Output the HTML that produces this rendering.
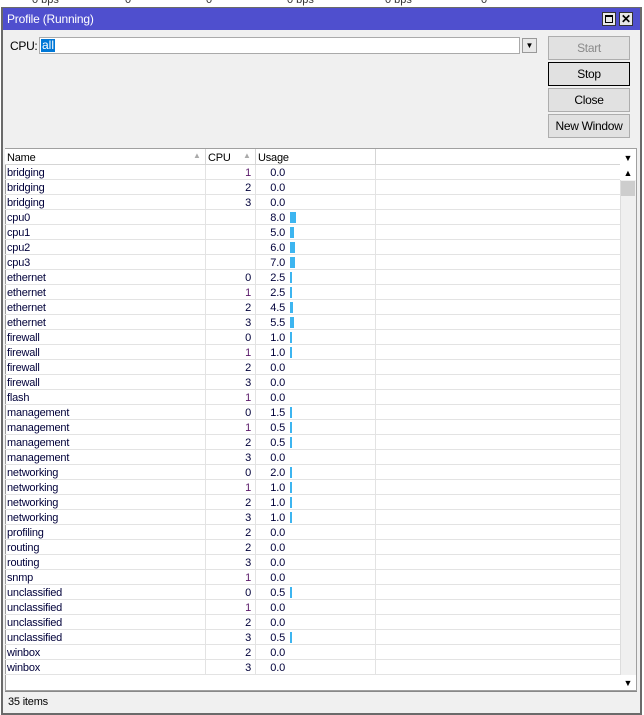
<!DOCTYPE html><html><head><style>
*{margin:0;padding:0;box-sizing:border-box}
body{width:644px;height:715px;background:#fff;position:relative;overflow:hidden;font-family:"Liberation Sans",sans-serif;font-size:11px;color:#000}
.a{position:absolute}
.btn{position:absolute;left:548px;width:82px;height:24px;border:1px solid #adadad;background:#e1e1e1;text-align:center;line-height:23px;font-size:12px;letter-spacing:-0.3px}
.row{position:absolute;left:5px;width:615px;height:15px;border-bottom:1px solid #e3e3e3;line-height:16px;font-size:11px;color:#00003a;letter-spacing:-0.2px}
.row span{position:absolute;top:0}
.n{left:2px}.c{left:200px;width:50px;text-align:right;padding-right:4px}.u{left:250px;width:30px;text-align:right}
.bar{position:absolute;top:2px;left:285px;height:11px;background:#3db5f0}
.vl{position:absolute;top:0;height:15px;width:1px;background:#e3e3e3}
</style></head><body>
<div class="a" style="left:0;top:0;width:644px;height:8px;background:#fff;font-size:11px;color:#333"><span class="a" style="left:32px;top:-6px">0 bps</span><span class="a" style="left:125px;top:-6px">0</span><span class="a" style="left:206px;top:-6px">0</span><span class="a" style="left:287px;top:-6px">0 bps</span><span class="a" style="left:385px;top:-6px">0 bps</span><span class="a" style="left:481px;top:-6px">0</span></div>
<div class="a" style="left:1px;top:7px;width:641px;height:708px;background:#f0f0f0;border:2px solid #6a6a6a;border-top:1px solid #6a6a6a"></div>
<div class="a" style="left:3px;top:8px;width:637px;height:22px;background:#4f4fce;color:#fff;font-size:12px;line-height:23px;padding-left:4px;letter-spacing:-0.2px">Profile (Running)</div>
<div class="a" style="left:602px;top:12px;width:14px;height:14px;background:#e8e8e8;border:1px solid #333"><div class="a" style="left:2px;top:2px;width:8px;height:8px;border:1px solid #000;border-top:2px solid #000"></div></div>
<div class="a" style="left:619px;top:12px;width:14px;height:14px;background:#e8e8e8;border:1px solid #333;font-size:12px;line-height:12px;text-align:center;font-weight:bold">✕</div>
<div class="a" style="left:10px;top:39px;font-size:12px;letter-spacing:-0.3px">CPU:</div>
<div class="a" style="left:39px;top:37px;width:481px;height:17px;background:#fff;border:1px solid #aaa"><span style="background:#0078d7;color:#fff;font-size:12px;line-height:13px;position:absolute;left:1px;top:1px;padding:0 1px">all</span></div>
<div class="a" style="left:522px;top:38px;width:15px;height:15px;border:1px solid #999;background:#e8e8e8;font-size:8px;text-align:center;line-height:13px">▼</div>
<div class="btn" style="top:36px;color:#8a8a8a">Start</div>
<div class="btn" style="top:62px;border:1px solid #000">Stop</div>
<div class="btn" style="top:88px">Close</div>
<div class="btn" style="top:114px">New Window</div>
<div class="a" style="left:5px;top:148px;width:632px;height:543px;background:#fff;border:1px solid #a0a0a0"></div>
<div class="a" style="left:5px;top:149px;width:615px;height:16px;background:#fff;border-bottom:1px solid #d5d5d5;font-size:11px;line-height:18px;letter-spacing:-0.2px">
<span class="a" style="left:2px">Name</span><span class="a" style="left:188px;color:#aaa;font-size:8px;line-height:14px">▲</span>
<span class="a" style="left:200px;width:1px;height:16px;background:#d5d5d5"></span><span class="a" style="left:203px">CPU</span><span class="a" style="left:238px;color:#aaa;font-size:8px;line-height:14px">▲</span>
<span class="a" style="left:250px;width:1px;height:16px;background:#d5d5d5"></span><span class="a" style="left:253px">Usage</span>
<span class="a" style="left:370px;width:1px;height:16px;background:#d5d5d5"></span></div>
<div class="a" style="left:620px;top:149px;width:16px;height:16px;font-size:9px;text-align:center;line-height:18px">▼</div>
<div class="a" style="left:620px;top:165px;width:16px;height:525px;background:#f0f0f0;border-left:1px solid #ddd"></div>
<div class="a" style="left:620px;top:165px;width:16px;height:15px;font-size:9px;text-align:center;line-height:16px;background:#fff">▲</div>
<div class="a" style="left:621px;top:181px;width:14px;height:15px;background:#cdcdcd"></div>
<div class="a" style="left:620px;top:675px;width:16px;height:15px;font-size:9px;text-align:center;line-height:16px;background:#fff">▼</div>
<div id="rows"></div>
<div class="a" style="left:5px;top:691px;width:632px;height:1px;background:#888"></div>
<div class="a" style="left:8px;top:696px;font-size:11px;letter-spacing:-0.2px">35 items</div>
<script>
var d=[["bridging",1,"0.0"],["bridging",2,"0.0"],["bridging",3,"0.0"],["cpu0","","8.0"],["cpu1","","5.0"],["cpu2","","6.0"],["cpu3","","7.0"],["ethernet",0,"2.5"],["ethernet",1,"2.5"],["ethernet",2,"4.5"],["ethernet",3,"5.5"],["firewall",0,"1.0"],["firewall",1,"1.0"],["firewall",2,"0.0"],["firewall",3,"0.0"],["flash",1,"0.0"],["management",0,"1.5"],["management",1,"0.5"],["management",2,"0.5"],["management",3,"0.0"],["networking",0,"2.0"],["networking",1,"1.0"],["networking",2,"1.0"],["networking",3,"1.0"],["profiling",2,"0.0"],["routing",2,"0.0"],["routing",3,"0.0"],["snmp",1,"0.0"],["unclassified",0,"0.5"],["unclassified",1,"0.0"],["unclassified",2,"0.0"],["unclassified",3,"0.5"],["winbox",2,"0.0"],["winbox",3,"0.0"]];
var h="";d.forEach(function(r,i){var v=parseFloat(r[2]);var w=v>0?Math.max(2,Math.round(v*0.75)):0;
h+='<div class="row" style="top:'+(165+i*15)+'px"><span class="n">'+r[0]+'</span><div class="vl" style="left:200px"></div><span class="c" style="color:'+(r[1]===1?'#5a1a6a':'#00003a')+'">'+r[1]+'</span><div class="vl" style="left:250px"></div><span class="u">'+r[2]+'</span>'+(w?'<div class="bar" style="width:'+w+'px"></div>':'')+'<div class="vl" style="left:370px"></div></div>';});
document.getElementById("rows").innerHTML=h;
</script>
</body></html>
